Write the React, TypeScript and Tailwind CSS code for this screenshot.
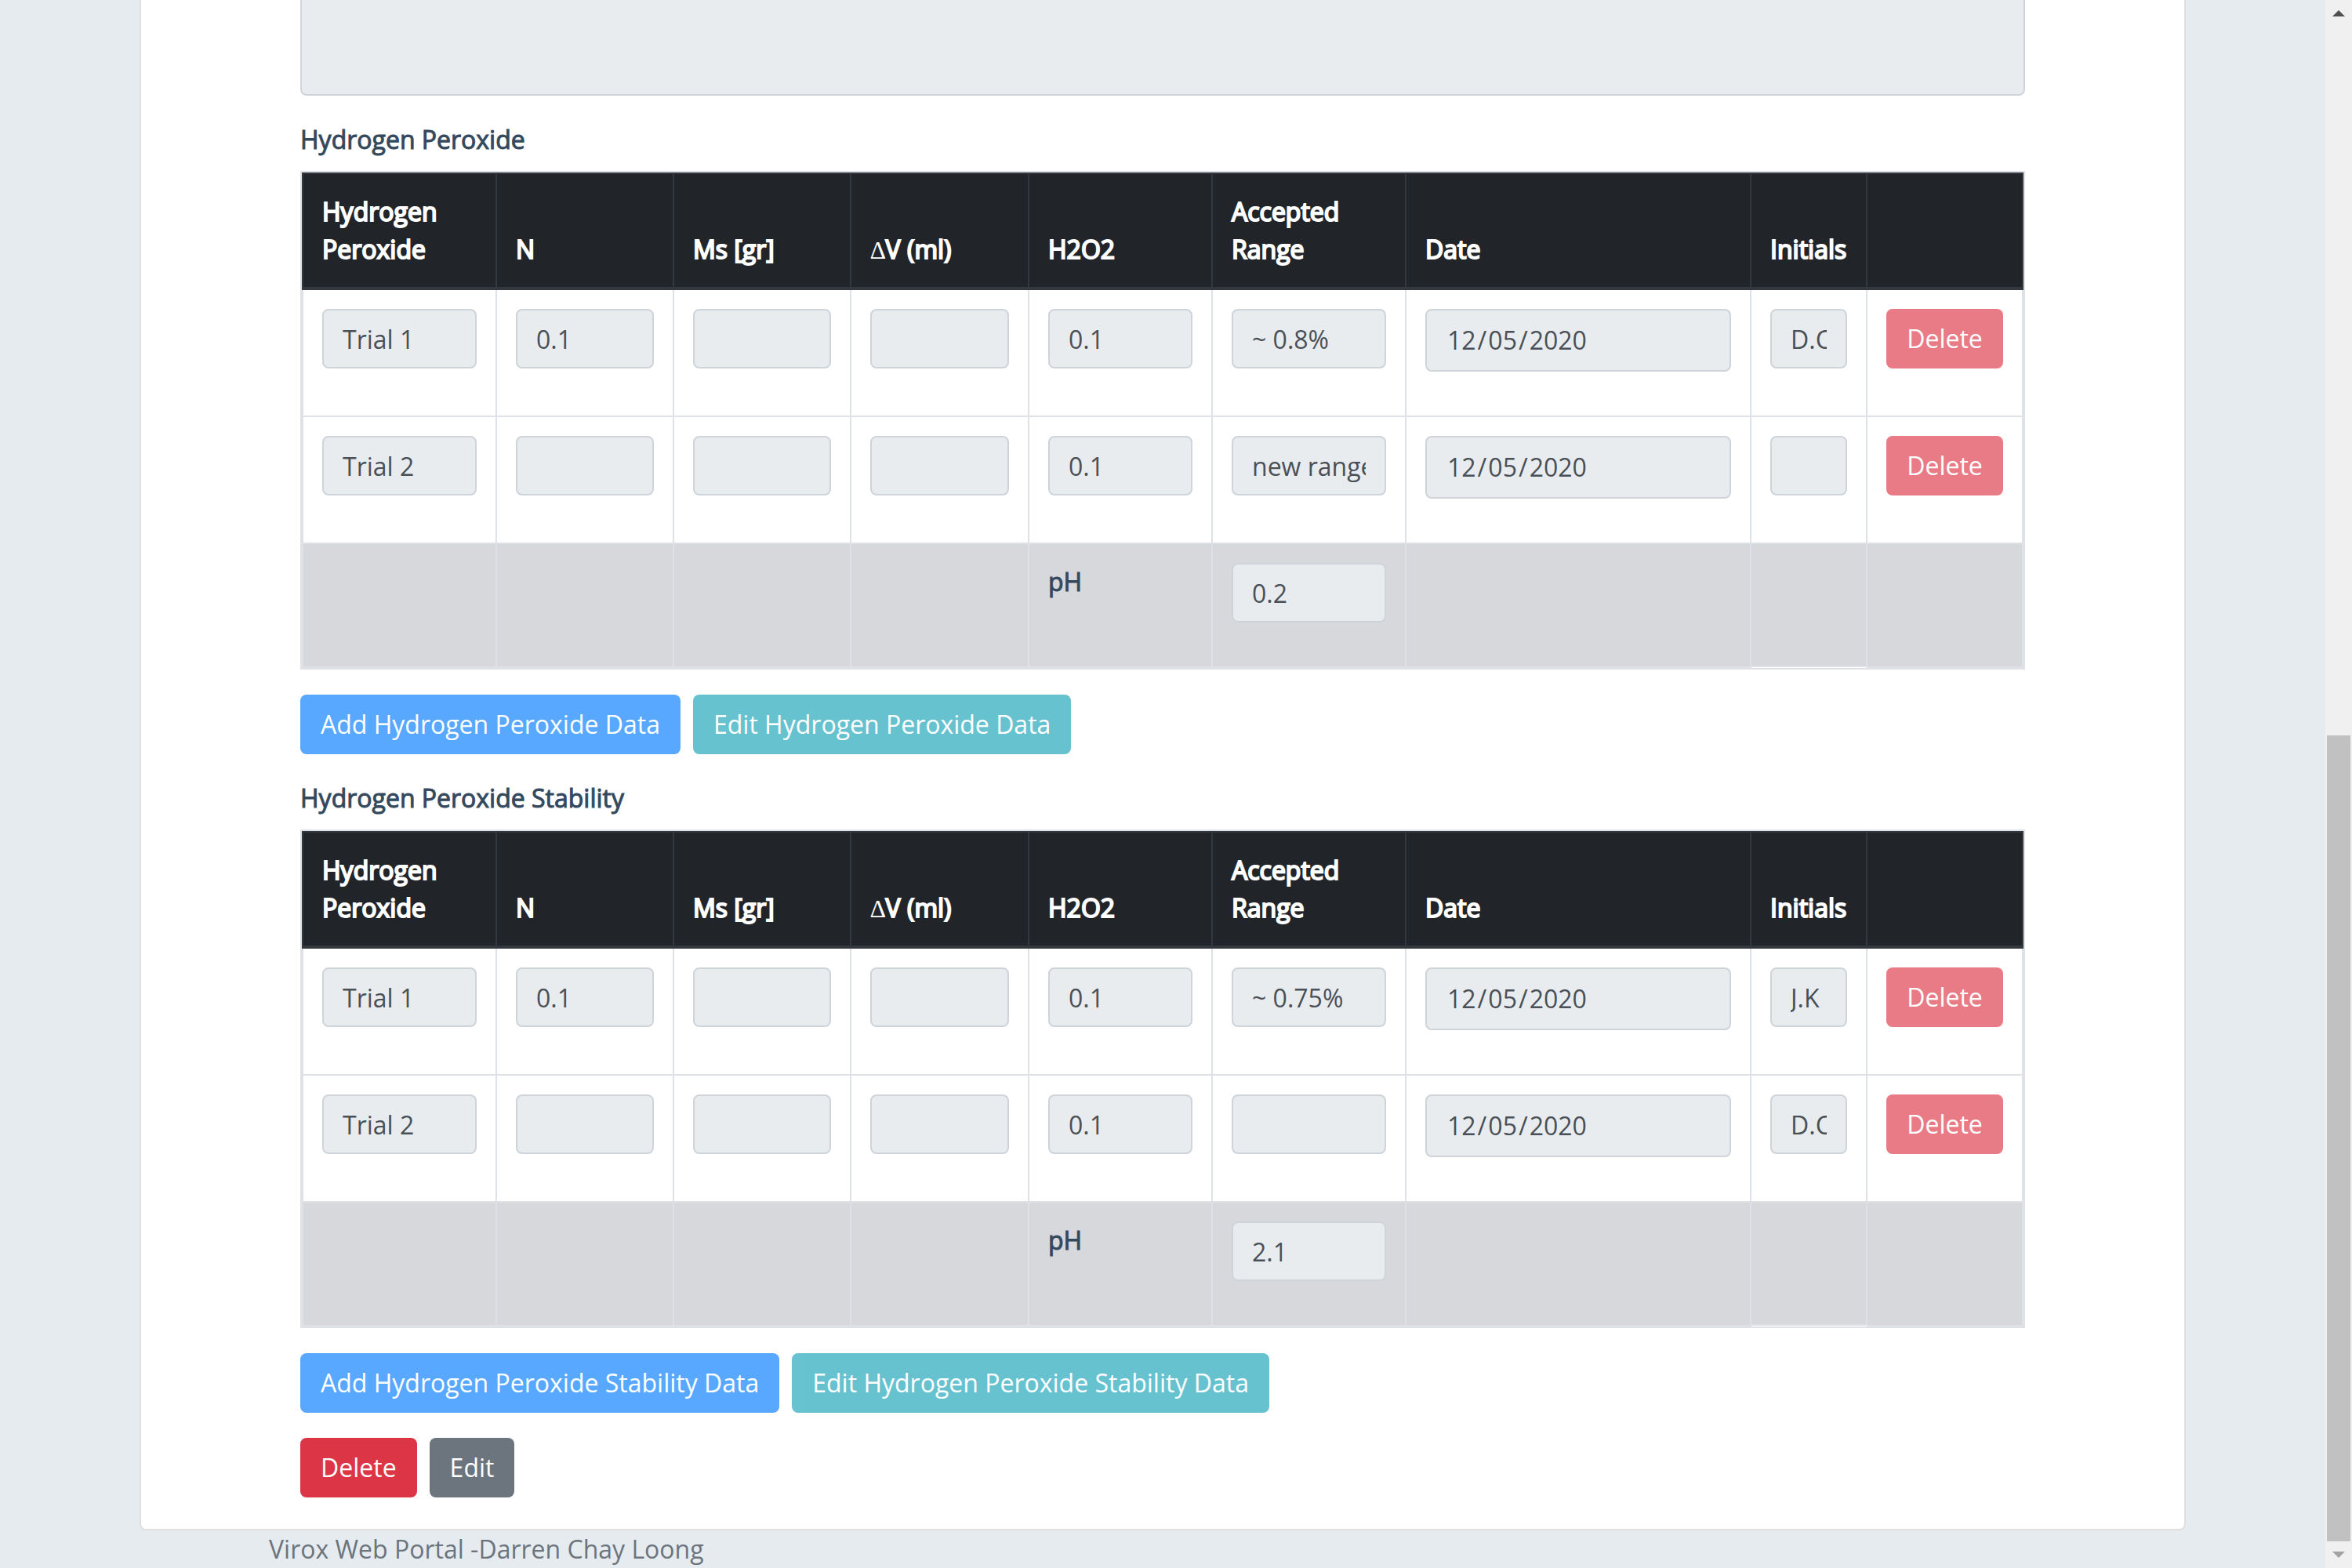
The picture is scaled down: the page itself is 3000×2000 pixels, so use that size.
import React from "react";

type Row = {
  trial: string;
  n: string;
  ms: string;
  dv: string;
  h2o2: string;
  range: string;
  date: string;
  initials: string;
};

const hydrogenRows: Row[] = [
  { trial: "Trial 1", n: "0.1", ms: "", dv: "", h2o2: "0.1", range: "~ 0.8%", date: "2020-12-05", initials: "D.CL" },
  { trial: "Trial 2", n: "", ms: "", dv: "", h2o2: "0.1", range: "new range", date: "2020-12-05", initials: "" },
];

const stabilityRows: Row[] = [
  { trial: "Trial 1", n: "0.1", ms: "", dv: "", h2o2: "0.1", range: "~ 0.75%", date: "2020-12-05", initials: "J.K" },
  { trial: "Trial 2", n: "", ms: "", dv: "", h2o2: "0.1", range: "", date: "2020-12-05", initials: "D.CL" },
];

const button =
  "h-[76px] rounded-lg px-[26px] text-white whitespace-nowrap disabled:opacity-65";

function Th({ children }: { children?: React.ReactNode }) {
  return (
    <th className="border-t-2 border-r-2 border-b-4 border-[#32383e] bg-[#212529] p-6 text-left align-bottom font-normal text-white [-webkit-text-stroke:2px_white] first:border-l-2">
      {children}
    </th>
  );
}

function Td({ children }: { children?: React.ReactNode }) {
  return (
    <td className="border-r-2 border-b-2 border-[#dee2e6] p-6 align-top first:border-l-2">
      {children}
    </td>
  );
}

const field =
  "block w-full rounded-lg border-2 border-[#ced4da] bg-[#e9ecef] px-6 text-[#495057]";

function Field({ label, value }: { label: string; value: string }) {
  return (
    <input
      type="text"
      aria-label={label}
      defaultValue={value}
      disabled
      className={`${field} mb-8 h-[76px]`}
    />
  );
}

function DateField({ label, value }: { label: string; value: string }) {
  return (
    <input
      type="date"
      aria-label={label}
      defaultValue={value}
      disabled
      className={`${field} mb-8 h-20 [&::-webkit-calendar-picker-indicator]:hidden [&::-webkit-datetime-edit]:p-0 [&::-webkit-datetime-edit-day-field]:px-[2px] [&::-webkit-datetime-edit-day-field]:text-[#495057] [&::-webkit-datetime-edit-month-field]:px-[2px] [&::-webkit-datetime-edit-month-field]:text-[#495057] [&::-webkit-datetime-edit-text]:text-[#495057] [&::-webkit-datetime-edit-year-field]:px-[2px] [&::-webkit-datetime-edit-year-field]:text-[#495057]`}
    />
  );
}

function Section({ id, title, rows, ph }: { id: string; title: string; rows: Row[]; ph: string }) {
  return (
    <section className="mt-8">
      <h2 id={id} className="mb-4 text-[#34495e] [-webkit-text-stroke:1px_#34495e]">
        {title}
      </h2>
      <table
        aria-labelledby={id}
        className="w-full table-fixed border-separate border-spacing-0 border-2 border-[#dee2e6]"
      >
        <colgroup>
          <col className="w-[249px]" />
          <col className="w-[226px]" />
          <col className="w-[226px]" />
          <col className="w-[227px]" />
          <col className="w-[234px]" />
          <col className="w-[247px]" />
          <col />
          <col className="w-[148px]" />
          <col className="w-[199px]" />
        </colgroup>
        <thead>
          <tr>
            <Th>Hydrogen Peroxide</Th>
            <Th>N</Th>
            <Th>Ms [gr]</Th>
            <Th>
              <span className="font-['Liberation_Serif',serif] leading-none [-webkit-text-stroke:0]">∆</span>V (ml)
            </Th>
            <Th>H2O2</Th>
            <Th>Accepted Range</Th>
            <Th>Date</Th>
            <Th>Initials</Th>
            <Th />
          </tr>
        </thead>
        <tbody>
          {rows.map((row) => (
            <tr key={row.trial}>
              <Td><Field label="Trial" value={row.trial} /></Td>
              <Td><Field label={`${row.trial} N`} value={row.n} /></Td>
              <Td><Field label={`${row.trial} Ms`} value={row.ms} /></Td>
              <Td><Field label={`${row.trial} ∆V`} value={row.dv} /></Td>
              <Td><Field label={`${row.trial} H2O2`} value={row.h2o2} /></Td>
              <Td><Field label={`${row.trial} accepted range`} value={row.range} /></Td>
              <Td><DateField label={`${row.trial} date`} value={row.date} /></Td>
              <Td><Field label={`${row.trial} initials`} value={row.initials} /></Td>
              <Td>
                <button type="button" disabled className={`${button} block w-full bg-[#dc3545]`}>
                  Delete
                </button>
              </Td>
            </tr>
          ))}
          <tr className="bg-[#d6d8db]">
            <Td />
            <Td />
            <Td />
            <Td />
            <Td>
              <span className="text-[#34495e] [-webkit-text-stroke:1px_#34495e]">pH</span>
            </Td>
            <Td><Field label="pH" value={ph} /></Td>
            <Td />
            <td className="border-r-2 border-b border-r-[#dee2e6] border-b-white shadow-[inset_0_-2px_0_#dee2e6]" />
            <Td />
          </tr>
        </tbody>
      </table>
      <div className="mt-8 flex gap-4">
        <button type="button" disabled className={`${button} bg-[#007bff]`}>
          Add {title} Data
        </button>
        <button type="button" disabled className={`${button} bg-[#17a2b8]`}>
          Edit {title} Data
        </button>
      </div>
    </section>
  );
}

function Scrollbar() {
  return (
    <div aria-hidden="true" className="flex w-[34px] shrink-0 flex-col bg-[#f0f0f0]">
      <div className="flex h-[34px] items-center justify-center">
        <svg width="16" height="8" viewBox="0 0 16 8" className="fill-[#505050]">
          <path d="M0 8 8 0l8 8z" />
        </svg>
      </div>
      <div className="flex flex-1 items-end px-[2px]">
        <div className="h-[53.2%] w-full bg-[#c1c1c1]" />
      </div>
      <div className="flex h-[34px] items-center justify-center">
        <svg width="16" height="8" viewBox="0 0 16 8" className="fill-[#a3a3a3]">
          <path d="M0 0h16L8 8z" />
        </svg>
      </div>
    </div>
  );
}

export default function App() {
  return (
    <div className="flex min-h-screen bg-[#e6ebef] font-['Open_Sans',sans-serif] text-[32px] leading-[48px]">
      <div className="min-w-0 flex-1">
        <main className="mx-[178px] rounded-b-lg border-2 border-t-0 border-[#dfdfdf] bg-white px-[203px] pb-10">
          <textarea
            aria-label="Notes"
            disabled
            className="block h-[122px] w-full resize-none rounded-b-lg border-2 border-t-0 border-[#ced4da] bg-[#e9ecef]"
          />
          <Section id="peroxide" title="Hydrogen Peroxide" rows={hydrogenRows} ph="0.2" />
          <Section id="stability" title="Hydrogen Peroxide Stability" rows={stabilityRows} ph="2.1" />
          <div className="mt-8 flex gap-4">
            <button type="button" className={`${button} bg-[#dc3545]`}>Delete</button>
            <button type="button" className={`${button} bg-[#6c757d]`}>Edit</button>
          </div>
        </main>
        <footer className="px-[343px] text-[#6c757d]">Virox Web Portal -Darren Chay Loong</footer>
      </div>
      <Scrollbar />
    </div>
  );
}
